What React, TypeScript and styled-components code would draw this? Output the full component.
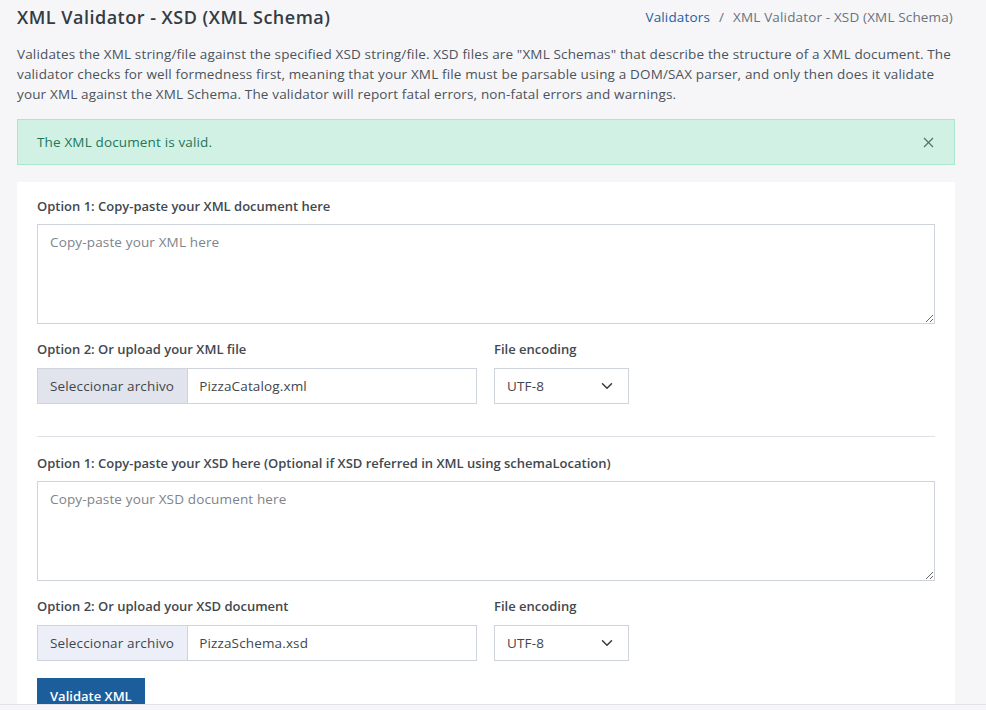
import React from "react";
import styled, { createGlobalStyle } from "styled-components";

const Global = createGlobalStyle`
  * { box-sizing: border-box; }
  html, body { margin: 0; padding: 0; }
  body {
    background: #f6f6f9;
    font-family: "Open Sans", "Noto Sans", Arial, sans-serif;
    font-size: 13.5px;
    letter-spacing: 0.15px;
    color: #4b535b;
  }
`;

const Page = styled.div`
  padding: 6px 31px 40px 17px;
`;

const Header = styled.div`
  display: flex;
  justify-content: space-between;
  align-items: center;
  height: 22px;
`;

const Title = styled.h1`
  margin: 0;
  font-size: 18px;
  font-weight: 600;
  color: #353b42;
  letter-spacing: 0.5px;
`;

const Crumbs = styled.div`
  display: flex;
  align-items: center;
  gap: 9px;
  color: #6a737c;
  padding-right: 2px;
`;

const CrumbLink = styled.a`
  color: #1e5f9c;
  text-decoration: none;
`;

const Desc = styled.p`
  margin: 16px 0 15px;
  line-height: 20px;
  color: #4b535b;
`;

const Alert = styled.div`
  display: flex;
  align-items: center;
  justify-content: space-between;
  height: 46px;
  padding: 0 20px 0 19px;
  background: #d1f1e5;
  border: 1px solid #a9e8cf;
  color: #21775a;
  margin-bottom: 17px;
`;

const Close = styled.button`
  border: 0;
  background: transparent;
  padding: 0;
  display: flex;
  cursor: pointer;
`;

const Card = styled.div`
  background: #ffffff;
  padding: 14px 20px 30px;
`;

const Label = styled.div<{ $mb?: number }>`
  font-size: 13px;
  font-weight: 600;
  letter-spacing: 0;
  color: #41484f;
  line-height: 20px;
  margin-bottom: ${(p) => p.$mb ?? 8}px;
`;

const Area = styled.textarea`
  display: block;
  width: 100%;
  height: 100px;
  border: 1px solid #cfd4dc;
  border-radius: 0;
  padding: 8px 12px;
  font-family: inherit;
  font-size: 13.5px;
  letter-spacing: 0.15px;
  color: #495057;
  resize: vertical;
  outline: none;
  &::placeholder { color: #7d848b; }
`;

const Row = styled.div`
  display: grid;
  grid-template-columns: 440px 135px;
  column-gap: 17px;
  margin-top: 15px;
`;

const Field = styled.div`
  display: flex;
  flex-direction: column;
`;

const FileBox = styled.div`
  display: flex;
  height: 36px;
  border: 1px solid #cfd4dc;
  background: #fff;
`;

const FileBtn = styled.div<{ $light?: boolean }>`
  display: flex;
  align-items: center;
  padding: 0 13px 0 12px;
  background: ${(p) => (p.$light ? "#eceff8" : "#e1e4ec")};
  border-right: 1px solid #cfd4dc;
  color: #3f464d;
  white-space: nowrap;
`;

const FileName = styled.div`
  display: flex;
  align-items: center;
  padding: 0 11px;
  color: #3f464d;
`;

const Select = styled.div`
  display: flex;
  align-items: center;
  justify-content: space-between;
  height: 36px;
  border: 1px solid #cfd4dc;
  padding: 0 15px 0 12px;
  color: #3f464d;
`;

const Divider = styled.hr`
  border: 0;
  border-top: 1px solid #dee2e6;
  margin: 32px 0 16px;
`;

const Submit = styled.button`
  margin-top: 17px;
  background: #1c5e9b;
  color: #fff;
  border: 0;
  border-radius: 0;
  height: 36px;
  padding: 0 13px;
  font-family: inherit;
  font-size: 13px;
  letter-spacing: 0;
  font-weight: 600;
`;

const Footer = styled.div`
  position: fixed;
  left: 0;
  right: 0;
  bottom: 0;
  height: 6px;
  background: #f6f6f9;
  border-top: 1px solid #e4e4e8;
`;

const Chevron = () => (
  <svg width="12" height="8" viewBox="0 0 12 8" fill="none">
    <path d="M1.5 1.8 6 6.2l4.5-4.4" stroke="#343a40" strokeWidth="1.5" strokeLinecap="round" strokeLinejoin="round" />
  </svg>
);

const XIcon = () => (
  <svg width="11" height="11" viewBox="0 0 11 11">
    <path d="M1 1l9 9M10 1l-9 9" stroke="#5d7268" strokeWidth="1.3" />
  </svg>
);

type UploadProps = { label: string; file: string; light?: boolean };

const UploadRow = ({ label, file, light }: UploadProps) => (
  <Row>
    <Field>
      <Label $mb={9}>{label}</Label>
      <FileBox>
        <FileBtn $light={light}>Seleccionar archivo</FileBtn>
        <FileName>{file}</FileName>
      </FileBox>
    </Field>
    <Field>
      <Label $mb={9}>File encoding</Label>
      <Select>
        <span>UTF-8</span>
        <Chevron />
      </Select>
    </Field>
  </Row>
);

export default function App() {
  return (
    <>
      <Global />
      <Page>
        <Header>
          <Title>XML Validator - XSD (XML Schema)</Title>
          <Crumbs>
            <CrumbLink href="#">Validators</CrumbLink>
            <span>/</span>
            <span>XML Validator - XSD (XML Schema)</span>
          </Crumbs>
        </Header>
        <Desc>
          Validates the XML string/file against the specified XSD string/file. XSD files are "XML Schemas" that describe the structure of a XML document. The validator checks for well formedness first, meaning that your XML file must be parsable using a DOM/SAX parser, and only then does it validate your XML against the XML Schema. The validator will report fatal errors, non-fatal errors and warnings.
        </Desc>
        <Alert>
          <span>The XML document is valid.</span>
          <Close aria-label="Close">
            <XIcon />
          </Close>
        </Alert>
        <Card>
          <Label>Option 1: Copy-paste your XML document here</Label>
          <Area placeholder="Copy-paste your XML here" />
          <UploadRow label="Option 2: Or upload your XML file" file="PizzaCatalog.xml" />
          <Divider />
          <Label>Option 1: Copy-paste your XSD here (Optional if XSD referred in XML using schemaLocation)</Label>
          <Area placeholder="Copy-paste your XSD document here" />
          <UploadRow label="Option 2: Or upload your XSD document" file="PizzaSchema.xsd" light />
          <Submit>Validate XML</Submit>
        </Card>
      </Page>
      <Footer />
    </>
  );
}
